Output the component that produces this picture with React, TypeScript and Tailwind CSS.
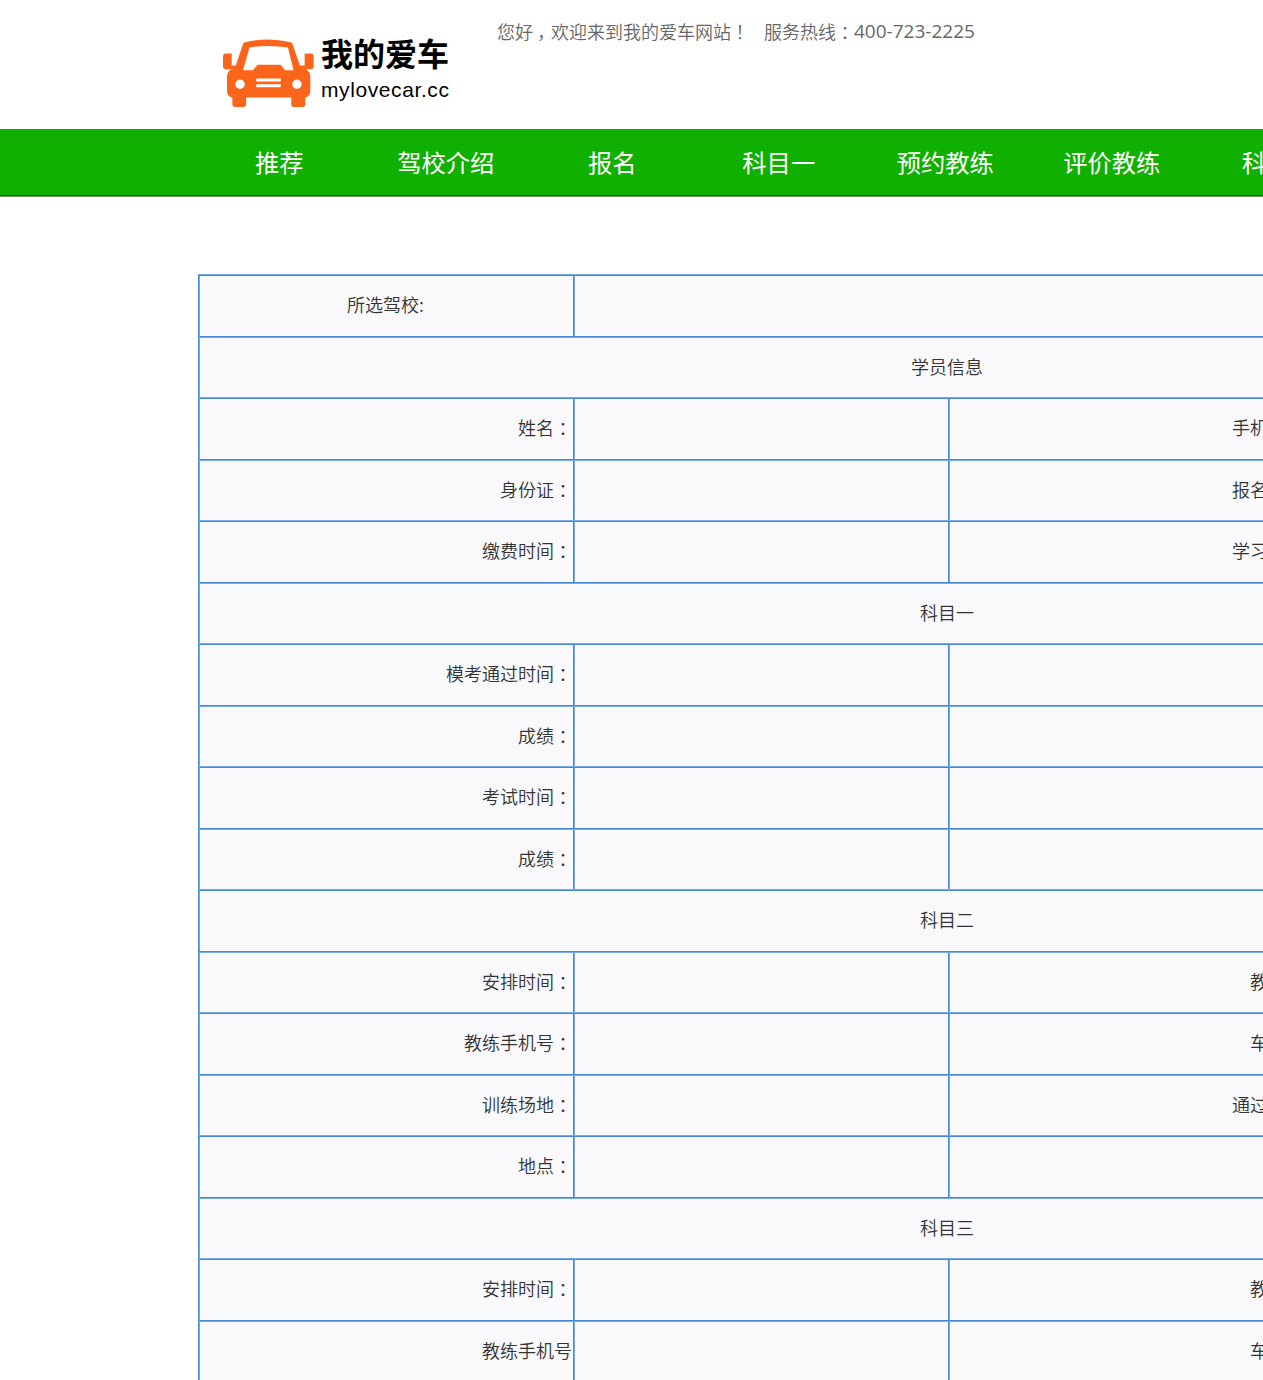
import React from "react";

type Row =
  | { kind: "school"; label: string }
  | { kind: "section"; label: string }
  | { kind: "pair"; left: string; right?: string };

const rows: Row[] = [
  { kind: "school", label: "所选驾校:" },
  { kind: "section", label: "学员信息" },
  { kind: "pair", left: "姓名：", right: "手机号码：" },
  { kind: "pair", left: "身份证：", right: "报名时间：" },
  { kind: "pair", left: "缴费时间：", right: "学习时间：" },
  { kind: "section", label: "科目一" },
  { kind: "pair", left: "模考通过时间：" },
  { kind: "pair", left: "成绩：" },
  { kind: "pair", left: "考试时间：" },
  { kind: "pair", left: "成绩：" },
  { kind: "section", label: "科目二" },
  { kind: "pair", left: "安排时间：", right: "教练员：" },
  { kind: "pair", left: "教练手机号：", right: "车牌号：" },
  { kind: "pair", left: "训练场地：", right: "通过时间：" },
  { kind: "pair", left: "地点：" },
  { kind: "section", label: "科目三" },
  { kind: "pair", left: "安排时间：", right: "教练员：" },
  { kind: "pair", left: "教练手机号", right: "车牌号：" },
];

const navItems = ["推荐", "驾校介绍", "报名", "科目一", "预约教练", "评价教练", "科目二"];

/* Full-width colon, centred in its em box and dropped to the baseline. */
function Colon() {
  return <span className="inline-block translate-y-[1px] font-['Noto_Sans_CJK_TC',sans-serif]">：</span>;
}

function Label({ text }: { text: string }) {
  const colon = text.endsWith("：");
  return (
    <span>
      {colon ? text.slice(0, -1) : text}
      {colon && <Colon />}
    </span>
  );
}

function Cell({ children, className = "" }: { children?: React.ReactNode; className?: string }) {
  return (
    <div className={`h-full shrink-0 border-l border-[#468ad7] ${className}`}>
      <div className="flex h-full items-center border-l border-[#74aae7] pb-[3px]">{children}</div>
    </div>
  );
}

function TableRow({ row, index }: { row: Row; index: number }) {
  const even = index % 2 === 0;
  return (
    <div className={even ? "h-[62px] border-t border-[#74aae7]" : "h-[61px] border-t border-[#468ad7]"}>
      <div className={even ? "flex h-full border-t border-[#468ad7]" : "flex h-full border-t border-[#74aae7] leading-[28px]"}>
        {row.kind === "school" && (
          <>
            <Cell className="w-[375px]">
              <div className="w-full pr-[2px] text-center">{row.label}</div>
            </Cell>
            <Cell className="w-[1125px]" />
          </>
        )}
        {row.kind === "section" && (
          <Cell className="w-[1500px]">
            <div className="w-full pr-[4px] text-center">{row.label}</div>
          </Cell>
        )}
        {row.kind === "pair" && (
          <>
            <Cell className="w-[375px]">
              <div className="w-full pr-px text-right"><Label text={row.left} /></div>
            </Cell>
            <Cell className="w-[375px]" />
            <Cell className="w-[375px]">
              <div className="w-full pr-px text-right"><Label text={row.right ?? ""} /></div>
            </Cell>
            <Cell className="w-[375px]" />
          </>
        )}
      </div>
    </div>
  );
}

function Car() {
  return (
    <svg viewBox="0 0 272 206" className="h-[69px] w-[91px] shrink-0" aria-hidden="true">
      <path
        fill="#fb651b"
        d="M8 43h18v36h12l22-64q2-5 8-6q66-16 132 0q6 1 8 6l22 64h14V43h18q9 0 9 9v29q0 9-9 9h-15q14 7 14 22v42q0 18-15 21v20q0 8-8 8h-26q-8 0-8-8v-20H69v20q0 8-8 8H36q-8 0-8-8v-20q-16-3-16-21v-42q0-15 14-22H9q-9 0-9-9V52q0-9 8-9Z"
      />
      <path fill="#fff" d="M79 25q57-9 115 0l17 68h-25l-14-16h-68L89 93H60Z" />
      <circle cx="51" cy="135" r="14" fill="#fff" />
      <circle cx="221" cy="135" r="14" fill="#fff" />
      <rect x="99" y="118" width="74" height="9" rx="3" fill="#fff" />
      <rect x="99" y="135" width="74" height="9" rx="3" fill="#fff" />
    </svg>
  );
}

export default function App() {
  return (
    <div className="h-[1380px] w-full overflow-hidden bg-white font-['Noto_Sans_CJK_SC',sans-serif] text-[18px] text-[#333]">
      <header className="flex h-[129px] pl-[223px]">
        <div className="flex h-full w-[274px] pt-[39px]">
          <Car />
          <div className="ml-[7px] text-black">
            <div className="-mt-[2px] h-8 whitespace-nowrap text-[32px] leading-[30px] font-bold">我的爱车</div>
            <div className="mt-[9px] font-['Liberation_Sans',sans-serif] text-[21px] leading-6 tracking-[0.6px] whitespace-nowrap">
              mylovecar.cc
            </div>
          </div>
        </div>
        <p className="mt-[18px] flex h-[27px] items-center font-[350] whitespace-nowrap text-[#666]">
          <span>您好</span>
          <span className="w-[18px] indent-[4px]">，</span>
          <span>欢迎来到我的爱车网站</span>
          <span className="font-['Noto_Sans_CJK_TC',sans-serif]">！</span>
          <span className="ml-[15px]">服务热线</span>
          <Colon />
          <span className="font-['Open_Sans',sans-serif] text-[19px] font-normal">400-723-2225</span>
        </p>
      </header>

      <nav className="h-[68px] border-b border-[#6b9660] bg-[#10b000]">
        <div className="flex h-[67px] border-b border-[#34502c] pl-[196px]">
          {navItems.map((item) => (
            <a
              key={item}
              className="flex h-[66px] w-[166.5px] shrink-0 items-center justify-center text-[24.3px] whitespace-nowrap text-white"
            >
              {item}
            </a>
          ))}
        </div>
      </nav>

      <main className="mt-[77px] ml-[198px] w-[1500px] bg-[#f9f9fc] font-[350] whitespace-nowrap">
        {rows.map((row, i) => (
          <TableRow key={i} row={row} index={i} />
        ))}
      </main>
    </div>
  );
}
